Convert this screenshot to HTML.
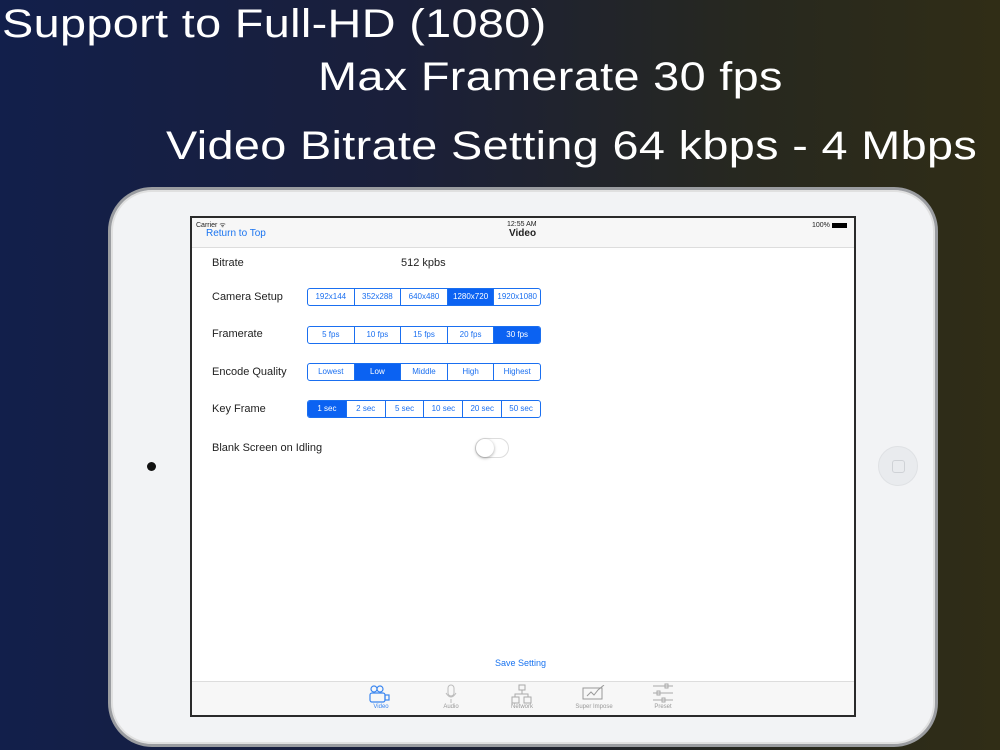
<!DOCTYPE html>
<html><head><meta charset="utf-8"><style>
*{margin:0;padding:0;box-sizing:border-box}
body{width:1000px;height:750px;overflow:hidden;background:linear-gradient(90deg,#121f4b 0%,#1a1f3a 40%,#27281f 75%,#302d16 100%);font-family:"Liberation Sans",sans-serif;position:relative}
.h{position:absolute;color:#fff;font-size:40px;white-space:nowrap;letter-spacing:0.3px;transform:scaleX(1.17);transform-origin:0 0}
.ipad{position:absolute;left:108px;top:187px;width:830px;height:560px;border-radius:44px;background:#f2f3f5;border:3px solid #9a9ca0;box-shadow:inset 0 0 0 2px #e0e0e0}
.scr{position:absolute;left:190px;top:216px;width:666px;height:501px;background:#fff;border:2px solid #2a2a2a}
.nav{position:absolute;left:0;top:0;width:100%;height:30px;background:#f7f7f7;border-bottom:1px solid #ddd}
.t{position:absolute;font-size:11px;color:#222;white-space:nowrap}
.seg{position:absolute;left:115px;height:18px;width:234px;border:1px solid #1a6ff0;border-radius:3px;display:flex;overflow:hidden}
.seg div{flex:1;border-left:1px solid #1a6ff0;font-size:8px;color:#1a6ff0;text-align:center;line-height:16px}
.seg div:first-child{border-left:none}
.seg .on{background:#0b62f2;color:#fff}
.tab{position:absolute;left:0;bottom:0;width:100%;height:34px;background:#f7f7f7;border-top:1px solid #ddd}
.ti{position:absolute;top:22px;font-size:6px;color:#999;width:60px;text-align:center}
</style></head><body>
<div class="h" style="left:2px;top:2px">Support to Full-HD (1080)</div>
<div class="h" style="left:318px;top:55px">Max Framerate 30 fps</div>
<div class="h" style="left:166px;top:124px">Video Bitrate Setting 64 kbps - 4 Mbps</div>
<div class="ipad"></div>
<div style="position:absolute;left:147px;top:462px;width:9px;height:9px;border-radius:50%;background:#111"></div>
<div style="position:absolute;left:878px;top:446px;width:40px;height:40px;border-radius:50%;background:#e9ebee;border:1px solid #dfe1e4"><div style="position:absolute;left:13px;top:13px;width:13px;height:13px;border:1px solid #cfd2d6;border-radius:3px"></div></div>
<div class="scr">
<div class="nav">
<div class="t" style="left:4px;top:3px;font-size:7px">Carrier ᯤ</div>
<div class="t" style="left:14px;top:10px;font-size:10px;color:#1a74f0">Return to Top</div>
<div class="t" style="left:315px;top:3px;font-size:7px">12:55 AM</div>
<div class="t" style="left:317px;top:10px;font-size:10px;font-weight:bold">Video</div>
<div class="t" style="left:620px;top:4px;font-size:7px">100% <span style="display:inline-block;width:15px;height:5px;background:#000;vertical-align:middle"></span></div>
</div>
<div class="t" style="left:20px;top:39px">Bitrate</div>
<div class="t" style="left:209px;top:39px">512 kpbs</div>
<div class="t" style="left:20px;top:73px">Camera Setup</div>
<div class="seg" style="top:70px"><div>192x144</div><div>352x288</div><div>640x480</div><div class="on">1280x720</div><div>1920x1080</div></div>
<div class="t" style="left:20px;top:110px">Framerate</div>
<div class="seg" style="top:108px"><div>5 fps</div><div>10 fps</div><div>15 fps</div><div>20 fps</div><div class="on">30 fps</div></div>
<div class="t" style="left:20px;top:148px">Encode Quality</div>
<div class="seg" style="top:145px"><div>Lowest</div><div class="on">Low</div><div>Middle</div><div>High</div><div>Highest</div></div>
<div class="t" style="left:20px;top:185px">Key Frame</div>
<div class="seg" style="top:182px"><div class="on">1 sec</div><div>2 sec</div><div>5 sec</div><div>10 sec</div><div>20 sec</div><div>50 sec</div></div>
<div class="t" style="left:20px;top:224px">Blank Screen on Idling</div>
<div style="position:absolute;left:283px;top:220px;width:34px;height:20px;border-radius:10px;border:1px solid #ddd;background:#fff"><div style="position:absolute;left:0;top:0;width:18px;height:18px;border-radius:50%;background:#fff;box-shadow:0 1px 3px rgba(0,0,0,.35)"></div></div>
<div class="t" style="left:303px;top:440px;font-size:9px;color:#1a74f0">Save Setting</div>
<div class="tab">
<svg style="position:absolute;left:176px;top:3px" width="24" height="20" viewBox="0 0 24 20" fill="none" stroke="#3a86f0" stroke-width="1.2"><circle cx="6" cy="4" r="3"/><circle cx="12" cy="4" r="3"/><rect x="2" y="8" width="15" height="9" rx="2"/><rect x="17" y="10" width="4" height="5"/></svg>
<div class="ti" style="left:159px;color:#3a86f0">Video</div>
<svg style="position:absolute;left:252px;top:2px" width="14" height="20" fill="none" stroke="#bbb"><rect x="4" y="1" width="6" height="11" rx="3"/><path d="M2 9q5 8 10 0M7 15v4"/></svg>
<div class="ti" style="left:229px">Audio</div>
<svg style="position:absolute;left:319px;top:2px" width="22" height="20" fill="none" stroke="#aaa"><rect x="8" y="1" width="6" height="5"/><rect x="1" y="13" width="7" height="6"/><rect x="13" y="13" width="7" height="6"/><path d="M11 6v4M4 13v-3h13v3"/></svg>
<div class="ti" style="left:300px">Network</div>
<svg style="position:absolute;left:390px;top:3px" width="24" height="16" fill="none" stroke="#999"><rect x="1" y="3" width="19" height="11"/><path d="M5 11l4-4 3 3 4-5 6-5"/></svg>
<div class="ti" style="left:372px">Super Impose</div>
<svg style="position:absolute;left:460px;top:0" width="22" height="22" fill="none" stroke="#aaa"><path d="M1 4h20M1 11h20M1 18h20"/><rect x="13" y="2" width="3" height="4"/><rect x="5" y="9" width="3" height="4"/><rect x="10" y="16" width="3" height="4"/></svg>
<div class="ti" style="left:441px">Preset</div>
</div>
</div>
</body></html>
